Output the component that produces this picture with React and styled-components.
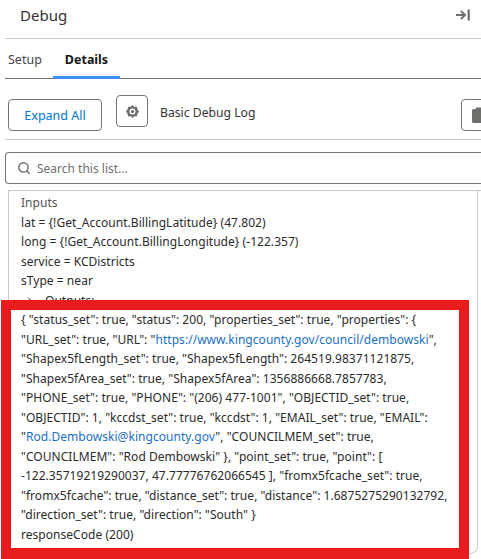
import React from "react";
import styled, { createGlobalStyle } from "styled-components";
import { ChevronRight, Search } from "lucide-react";

const GlobalStyle = createGlobalStyle`
  html, body {
    margin: 0;
    padding: 0;
    background: #fff;
    overflow: hidden;
  }
  body {
    font-family: "Noto Sans", "Open Sans", sans-serif;
    color: #2b2b2b;
  }
`;

const Page = styled.div`
  position: relative;
  width: 481px;
  height: 559px;
  overflow: hidden;
  padding-left: 5px;
  box-sizing: border-box;
`;

const Header = styled.div`
  display: flex;
  align-items: center;
  justify-content: space-between;
  height: 39px;
  padding: 0 11px 8px 15px;
  box-sizing: border-box;
  border-bottom: 1px solid #c9c9c9;
  font-size: 15px;
  color: #333;
`;

const CollapseBtn = styled.span`
  display: flex;
  color: #706e6b;
`;

const Tabs = styled.div`
  display: flex;
  height: 40px;
  box-sizing: border-box;
  border-bottom: 1px solid #747474;
`;

const Tab = styled.div`
  display: flex;
  align-items: center;
  padding: 3px 12px 0;
  margin-bottom: -1px;
  font-size: 12.5px;
  font-weight: ${(p) => (p.$active ? 700 : 400)};
  color: ${(p) => (p.$active ? "#181818" : "#444")};
  border-bottom: 3px solid ${(p) => (p.$active ? "#3b8ff0" : "transparent")};
  &:first-child {
    padding: 3px 11px 0 3px;
  }
`;

const Toolbar = styled.div`
  display: flex;
  align-items: flex-start;
  height: 61px;
  padding: 16px 0 0 3px;
  box-sizing: border-box;
  border-bottom: 1px solid #c9c9c9;
`;

const ExpandBtn = styled.button`
  flex: none;
  width: 94px;
  height: 32px;
  margin-top: 4px;
  padding: 0;
  background: #fff;
  border: 1px solid #747474;
  border-radius: 4px;
  color: #0176d3;
  font: 12.5px "Noto Sans", sans-serif;
`;

const IconBtn = styled.button`
  display: flex;
  align-items: center;
  justify-content: ${(p) => (p.$cut ? "flex-start" : "center")};
  flex: none;
  width: 32px;
  height: 32px;
  margin: ${(p) => (p.$cut ? "4px 0 0 0" : "0 0 0 14px")};
  padding: ${(p) => (p.$cut ? "0 0 0 9px" : "0")};
  box-sizing: border-box;
  background: #fff;
  border: 1px solid #747474;
  border-radius: 4px;
  color: #706e6b;
`;

const LogName = styled.span`
  flex: none;
  width: 301px;
  margin: 9px 0 0 12px;
  box-sizing: border-box;
  font-size: 12.2px;
  color: #333;
  white-space: nowrap;
`;

const SearchBox = styled.div`
  display: flex;
  align-items: center;
  gap: 6px;
  height: 32px;
  box-sizing: border-box;
  margin: 12px 0 0 0;
  padding-left: 11px;
  border: 1px solid #747474;
  border-right: 0;
  border-radius: 4px 0 0 4px;
  color: #706e6b;
  font-size: 12px;
`;

const LogSection = styled.div`
  margin: 6px 0 0 3px;
  border-top: 1px solid #c9c9c9;
`;

const LogPanel = styled.div`
  width: 470px;
  height: 363px;
  padding: 2px 0 0 12px;
  box-sizing: border-box;
  border: 1px solid #c9c9c9;
  border-top: 0;
  border-radius: 0 0 8px 8px;
`;

const LogLine = styled.div`
  height: 19.55px;
  line-height: 19.55px;
  font-size: 12px;
  letter-spacing: 0.04px;
  white-space: nowrap;
  color: ${(p) => (p.$muted ? "#555" : "#2b2b2b")};
`;

const Outputs = styled(LogLine)`
  display: flex;
  align-items: center;
  gap: 9px;
  padding-left: 3px;
`;

const Callout = styled.div`
  position: absolute;
  left: 1px;
  top: 300px;
  width: 468px;
  height: 259px;
  box-sizing: border-box;
  padding: 0 0 0 10px;
  background: #fff;
  border: 10px solid #e81c1c;
  border-bottom-width: 11px;
`;

const Link = styled.span`
  color: #1b6fc2;
`;

// pointer into a bar, heavier than the lucide one
const CollapseIcon = () => (
  <svg width="14" height="12" viewBox="0 0 14 12" fill="currentColor">
    <path d="M0 5h6.5L4.2 2.6 5.6 1.2 10.4 6l-4.8 4.8-1.4-1.4L6.5 7H0z" />
    <rect x="11.6" y="0.5" width="2.2" height="11" />
  </svg>
);

const GearIcon = () => (
  <svg width="13" height="13" viewBox="0 0 24 24" fill="currentColor">
    <path
      fillRule="evenodd"
      d="M12 0l3 3.4 5-.4 1 4.6 3 4.4-3 4.4-1 4.6-5-.4-3 3.4-3-3.4-5 .4-1-4.6L0 12l3-4.4 1-4.6 5 .4zM12 6.5a5.5 5.5 0 1 0 0 11 5.5 5.5 0 0 0 0-11z"
    />
    <circle cx="12" cy="12" r="3" />
  </svg>
);

const ClipboardIcon = () => (
  <svg width="16" height="16" viewBox="0 0 16 16" fill="currentColor" style={{ flex: "none" }}>
    <path d="M5 0.5h6V2h2.5A1.5 1.5 0 0 1 15 3.5v11a1.5 1.5 0 0 1-1.5 1.5h-11A1.5 1.5 0 0 1 1 14.5v-11A1.5 1.5 0 0 1 2.5 2H5z" />
  </svg>
);

const App = () => {
  return (
    <Page>
      <GlobalStyle />
      <Header>
        Debug
        <CollapseBtn>
          <CollapseIcon />
        </CollapseBtn>
      </Header>
      <Tabs>
        <Tab>Setup</Tab>
        <Tab $active>Details</Tab>
      </Tabs>
      <Toolbar>
        <ExpandBtn>Expand All</ExpandBtn>
        <IconBtn>
          <GearIcon />
        </IconBtn>
        <LogName>Basic Debug Log</LogName>
        <IconBtn $cut>
          <ClipboardIcon />
        </IconBtn>
      </Toolbar>
      <SearchBox>
        <Search size={14} strokeWidth={2.4} />
        Search this list...
      </SearchBox>
      <LogSection>
        <LogPanel>
          <LogLine $muted>Inputs</LogLine>
          <LogLine>lat = {"{!Get_Account.BillingLatitude}"} (47.802)</LogLine>
          <LogLine>long = {"{!Get_Account.BillingLongitude}"} (-122.357)</LogLine>
          <LogLine>service = KCDistricts</LogLine>
          <LogLine>sType = near</LogLine>
          <Outputs>
            <ChevronRight size={12} />
            Outputs:
          </Outputs>
        </LogPanel>
      </LogSection>
      <Callout>
        <LogLine>{'{ "status_set": true, "status": 200, "properties_set": true, "properties": {'}</LogLine>
        <LogLine>
          "URL_set": true, "URL": "<Link>https://www.kingcounty.gov/council/dembowski</Link>",
        </LogLine>
        <LogLine>"Shapex5fLength_set": true, "Shapex5fLength": 264519.98371121875,</LogLine>
        <LogLine>"Shapex5fArea_set": true, "Shapex5fArea": 1356886668.7857783,</LogLine>
        <LogLine>"PHONE_set": true, "PHONE": "(206) 477-1001", "OBJECTID_set": true,</LogLine>
        <LogLine>"OBJECTID": 1, "kccdst_set": true, "kccdst": 1, "EMAIL_set": true, "EMAIL":</LogLine>
        <LogLine>
          "<Link>Rod.Dembowski@kingcounty.gov</Link>", "COUNCILMEM_set": true,
        </LogLine>
        <LogLine>{'"COUNCILMEM": "Rod Dembowski" }, "point_set": true, "point": ['}</LogLine>
        <LogLine>-122.35719219290037, 47.77776762066545 ], "fromx5fcache_set": true,</LogLine>
        <LogLine>"fromx5fcache": true, "distance_set": true, "distance": 1.6875275290132792,</LogLine>
        <LogLine>{'"direction_set": true, "direction": "South" }'}</LogLine>
        <LogLine>responseCode (200)</LogLine>
      </Callout>
    </Page>
  );
};

export default App;
